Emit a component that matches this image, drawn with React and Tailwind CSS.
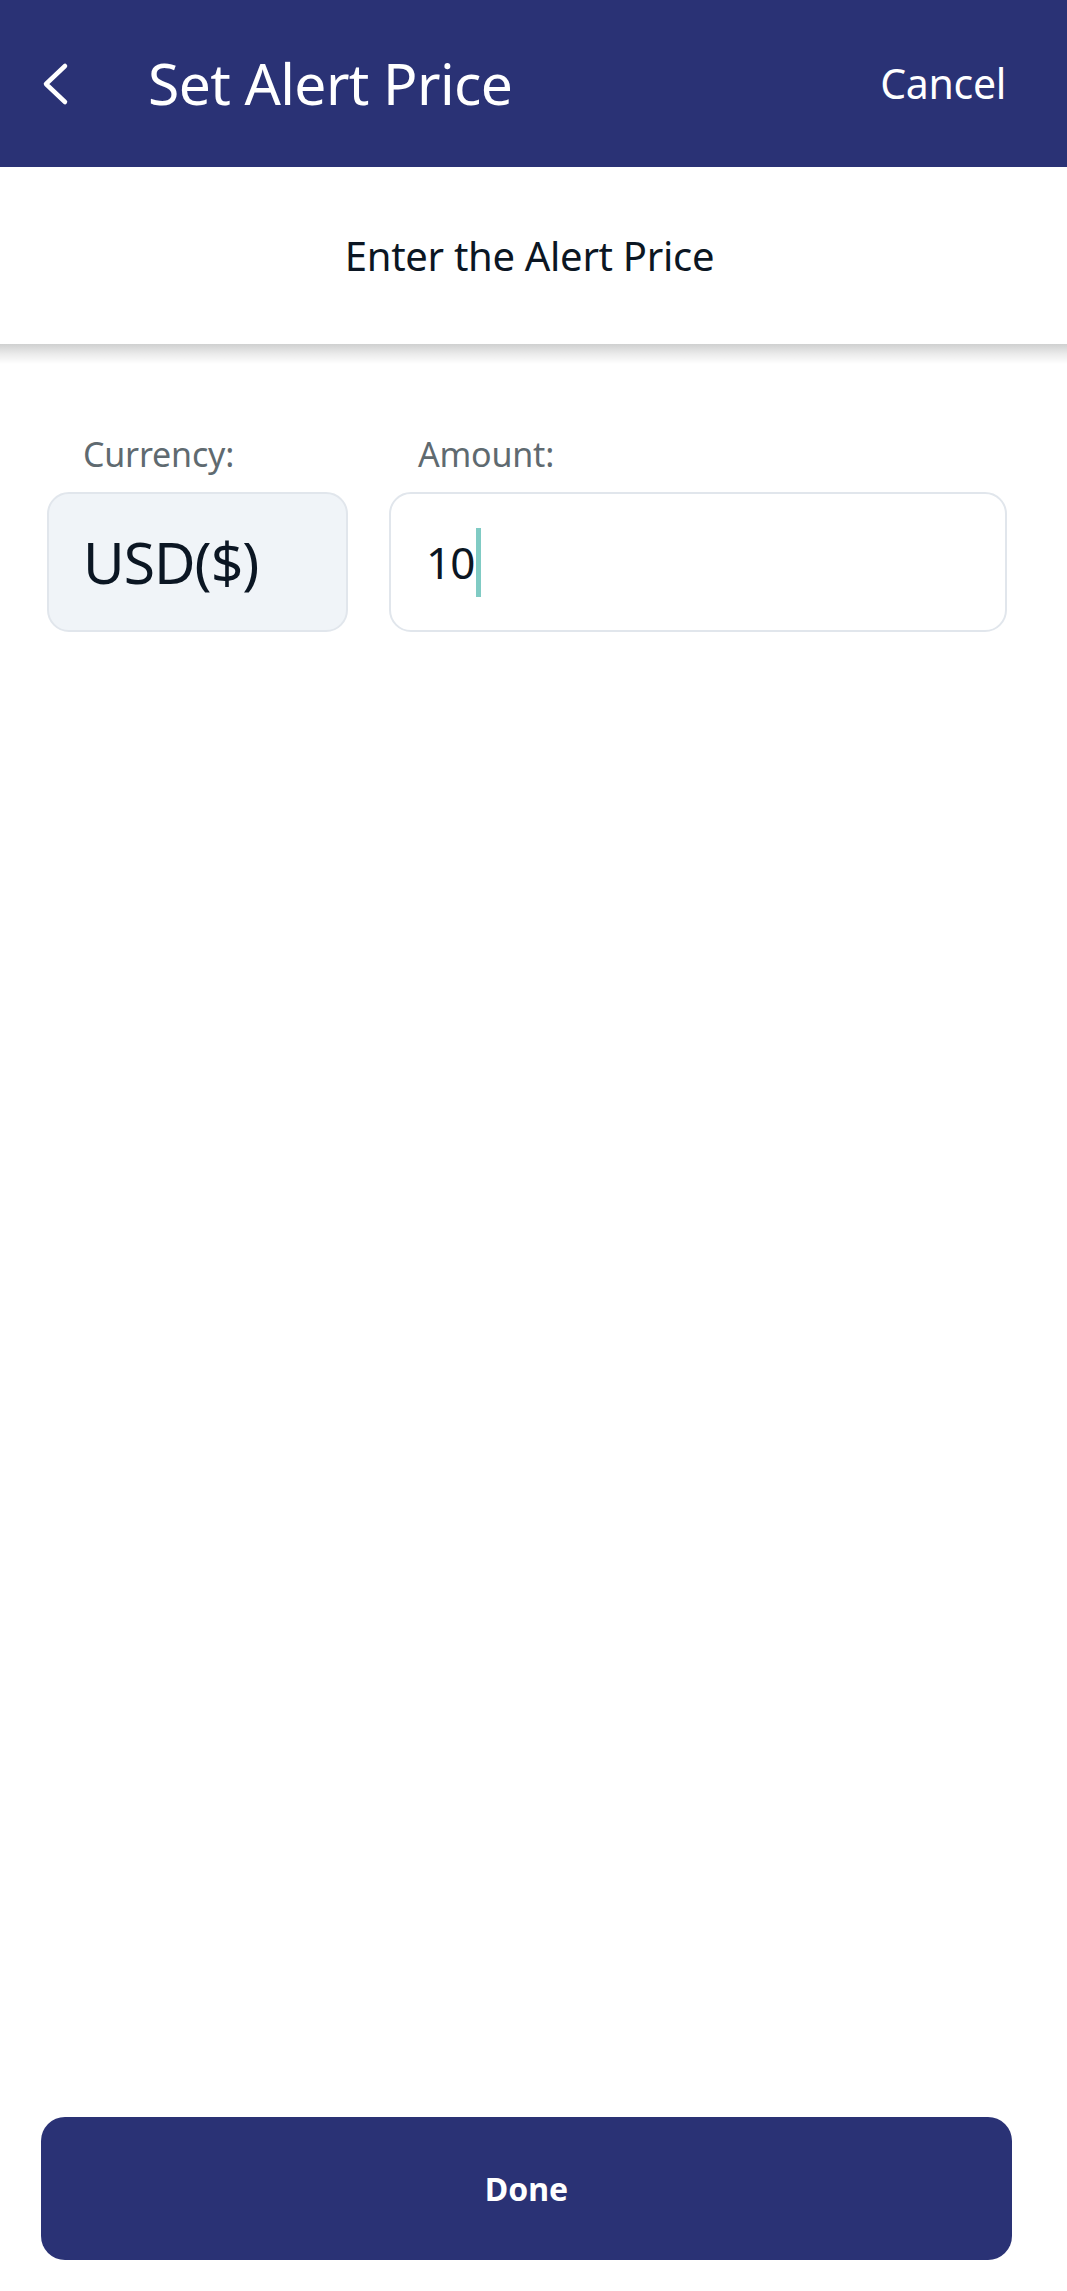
import { useState } from 'react';

export default function App() {
  const [amount] = useState('10');

  return (
    <div className="flex flex-col min-h-[2291px] bg-white font-['Noto_Sans',sans-serif]">
      {/* Top bar */}
      <header className="flex items-center h-[167px] bg-[#2a3275] text-white">
        <button className="ml-[41px] w-[28px] h-[44px] flex items-center justify-center">
          <svg width="28" height="44" viewBox="0 0 28 44" fill="none">
            <polyline points="24,4 5,22 24,40" stroke="white" strokeWidth="4.5" strokeLinecap="round" strokeLinejoin="round" />
          </svg>
        </button>
        <h1 className="ml-[79px] text-[57px] leading-none font-normal tracking-[-0.6px]">Set Alert Price</h1>
        <button className="ml-auto mr-[61px] text-[41px] leading-none tracking-[-0.3px]">Cancel</button>
      </header>

      {/* Sub heading */}
      <div className="flex items-center justify-center h-[177px] pr-[8px] bg-white">
        <p className="text-[40px] leading-none text-[#0b1623] tracking-[-0.3px]">Enter the Alert Price</p>
      </div>
      <div className="h-[20px] bg-gradient-to-b from-[#cfd0d0] via-[#ebebeb] to-white"></div>

      {/* Inputs */}
      <div className="flex gap-[41px] mt-[70px] pl-[47px] pr-[60px]">
        <div className="w-[301px] flex flex-col">
          <label className="pl-[36px] text-[34px] leading-[40px] text-[#5f6a70] tracking-[-0.2px]">Currency:</label>
          <div className="mt-[18px] h-[140px] flex items-center px-[34px] rounded-[22px] border-2 border-[#e1e6ec] bg-[#f0f4f8]">
            <span className="text-[57px] leading-none text-[#0b1623] tracking-[-1px]">USD($)</span>
          </div>
        </div>
        <div className="flex-1 flex flex-col">
          <label className="pl-[29px] text-[34px] leading-[40px] text-[#5f6a70] tracking-[-0.2px]">Amount:</label>
          <div className="mt-[18px] h-[140px] flex items-center px-[35px] rounded-[22px] border-2 border-[#e1e6ec] bg-white">
            <span className="text-[44px] leading-none text-[#0b1623] tracking-[-1px]">{amount}</span>
            <span className="ml-[2px] w-[5px] h-[69px] bg-[#80cbc4]"></span>
          </div>
        </div>
      </div>

      <div className="flex-1"></div>

      {/* Done */}
      <button className="ml-[41px] mb-[31px] w-[971px] h-[143px] rounded-[24px] bg-[#2a3275] text-white text-[32px] font-bold leading-none">
        Done
      </button>
    </div>
  );
}
